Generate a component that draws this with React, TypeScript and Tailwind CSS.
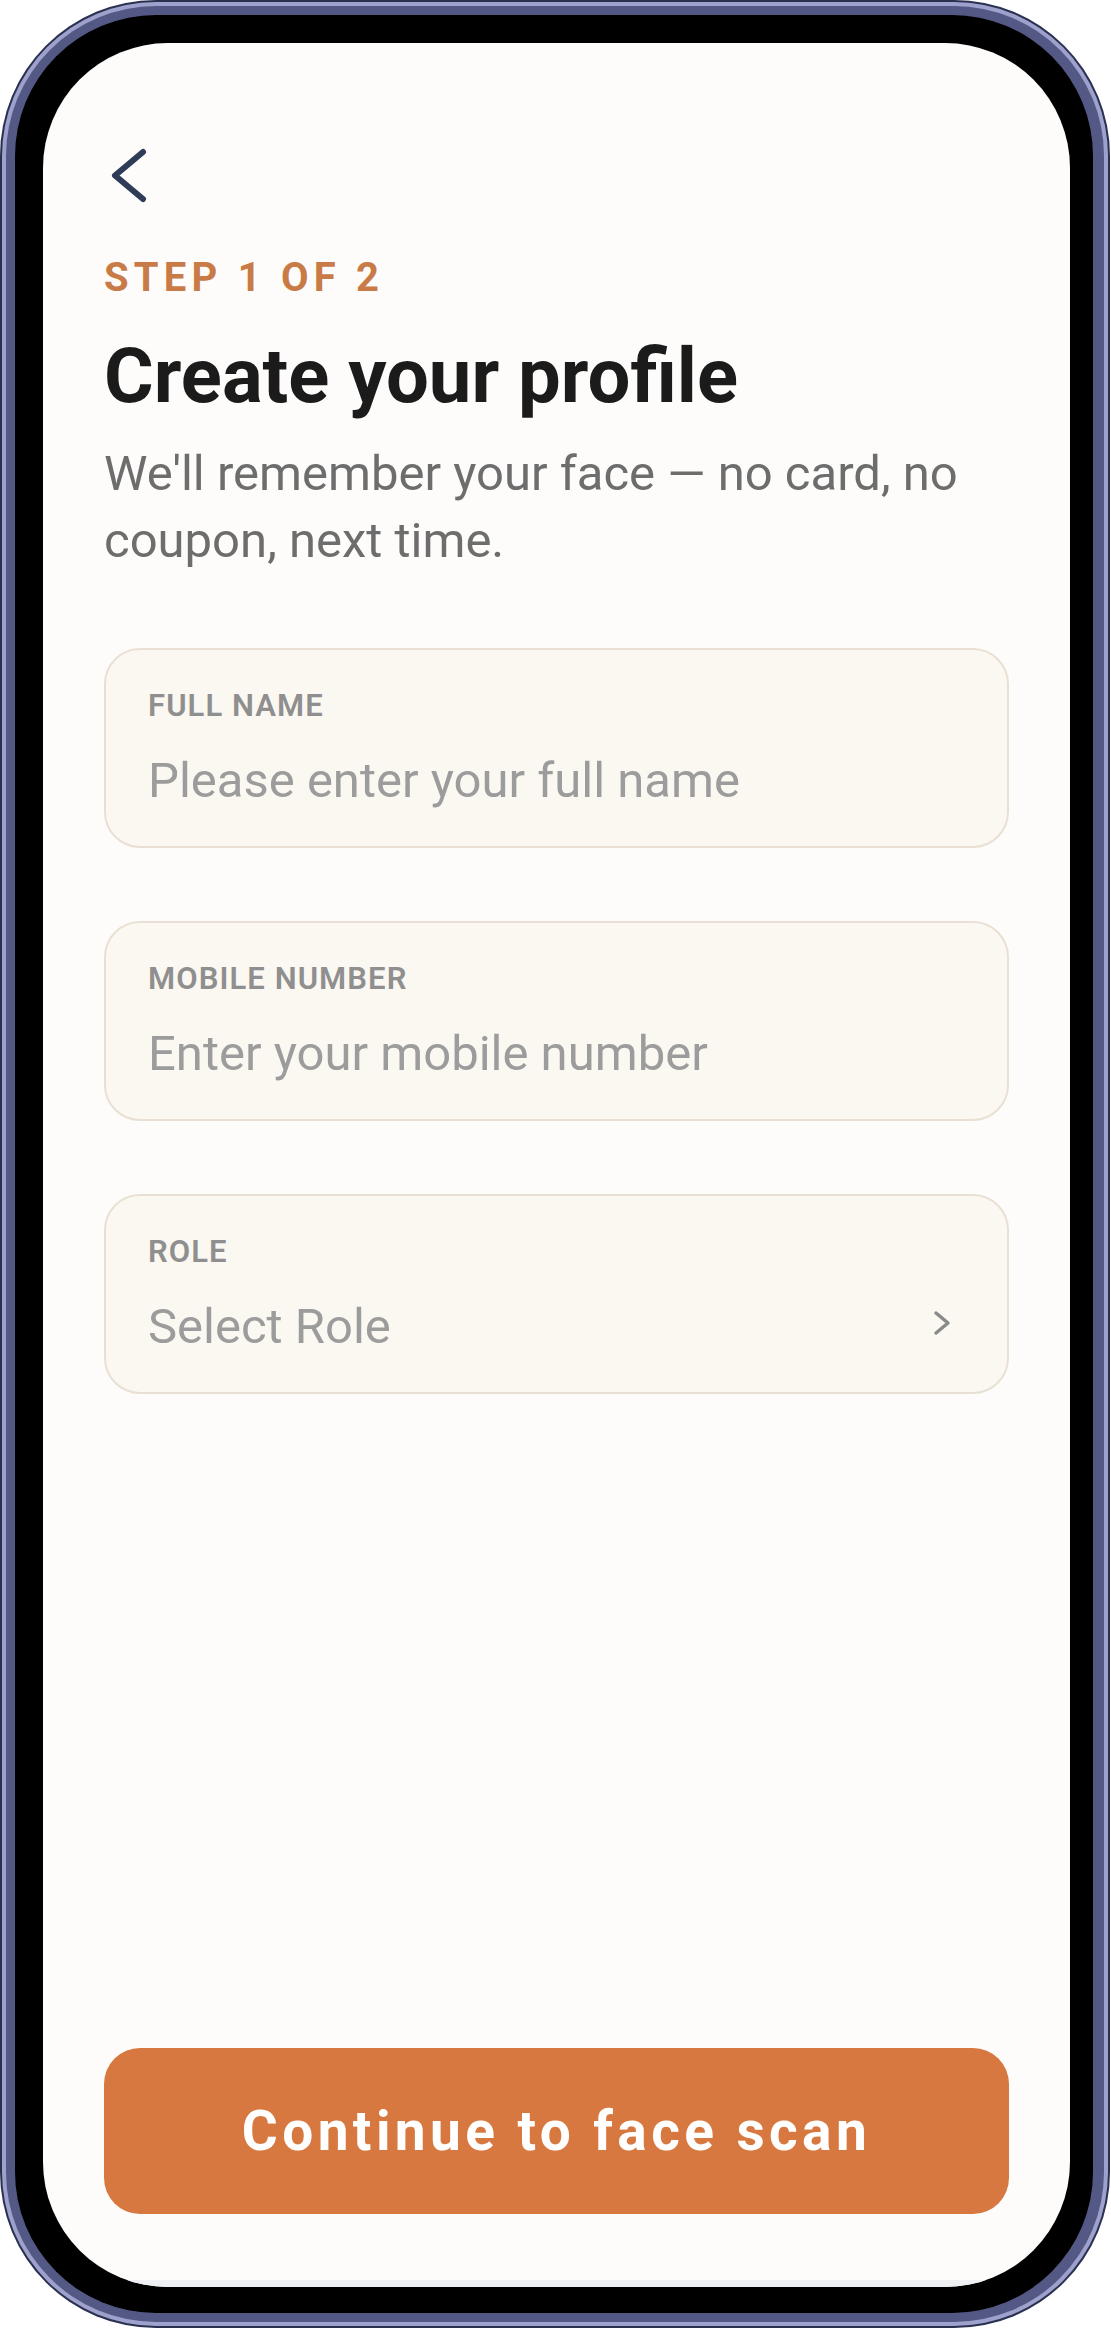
import { useState } from "react";

function Field({ label, placeholder, select }: { label: string; placeholder: string; select?: boolean }) {
  return (
    <div className="h-[200px] rounded-[36px] border-2 border-[#e9e0d3] bg-[#fbf8f2] pl-[42px] pr-[42px] pt-[38px] pb-[36px]">
      <div className="text-[31px] leading-[36px] font-semibold tracking-[0.035em] text-[#8f8f8f]">{label}</div>
      <div className="mt-[28px] flex h-[58px] items-center justify-between">
        <span className="text-[49px] leading-[58px] text-[#9c9c9c]">{placeholder}</span>
        {select && (
          <svg width="20" height="28" viewBox="0 0 20 28" className="mr-[13px] mb-[8px]" fill="none" stroke="#8b8b8b" strokeWidth="3.5" strokeLinecap="round" strokeLinejoin="round">
            <polyline points="4,4 16,14 4,24" />
          </svg>
        )}
      </div>
    </div>
  );
}

export default function App() {
  const [role] = useState<string | null>(null);

  return (
    <div className="w-[1111px] h-[2331px] bg-white" style={{ fontFamily: "Roboto, 'Noto Sans', sans-serif" }}>
      {/* device frame */}
      <div className="w-[1110px] h-[2328px] rounded-[156px] bg-[#2a3050] p-[2px]">
        <div className="h-full rounded-[154px] bg-[#9ea1cb] p-[4px]">
          <div className="h-full rounded-[150px] bg-[#545884] pt-[9px] pl-[9px] pr-[11px] pb-[9px]">
            <div className="h-full rounded-[141px] bg-black pt-[28px] pl-[28px] pr-[23px] pb-[26px]">
              <div className="h-full rounded-[125px] bg-[#fdfcfa] overflow-hidden flex flex-col">
                <div className="px-[61px] flex flex-col">
                  <button className="mt-[97px] w-[48px]">
                    <svg width="48" height="72" viewBox="0 0 48 72" fill="none" stroke="#2f3c57" strokeWidth="6" strokeLinecap="round" strokeLinejoin="round">
                      <polyline points="39,12 11,35.5 39,59" />
                    </svg>
                  </button>

                  <div className="mt-[43px] text-[40px] leading-[46px] font-bold tracking-[0.13em] text-[#c97b47]">STEP 1 OF 2</div>
                  <h1 className="mt-[31px] text-[76px] leading-[88px] font-bold text-[#1b1b1b]">Create your profile</h1>
                  <p className="mt-[20px] text-[49px] leading-[67px] text-[#6d6d6d]">
                    We'll remember your face — no card, no coupon, next time.
                  </p>

                  <div className="mt-[74px] flex flex-col gap-[73px]">
                    <Field label="FULL NAME" placeholder="Please enter your full name" />
                    <Field label="MOBILE NUMBER" placeholder="Enter your mobile number" />
                    <Field label="ROLE" placeholder={role ?? "Select Role"} select />
                  </div>
                </div>

                <div className="flex-1" />

                <div className="px-[61px]">
                  <button className="w-full h-[166px] rounded-[36px] bg-[#d87841] text-white text-[55px] font-bold tracking-[0.08em]">
                    Continue to face scan
                  </button>
                </div>
                <div className="h-[66px]" />
                <div className="h-[7px] bg-[#eef0f3]" />
              </div>
            </div>
          </div>
        </div>
      </div>
    </div>
  );
}
